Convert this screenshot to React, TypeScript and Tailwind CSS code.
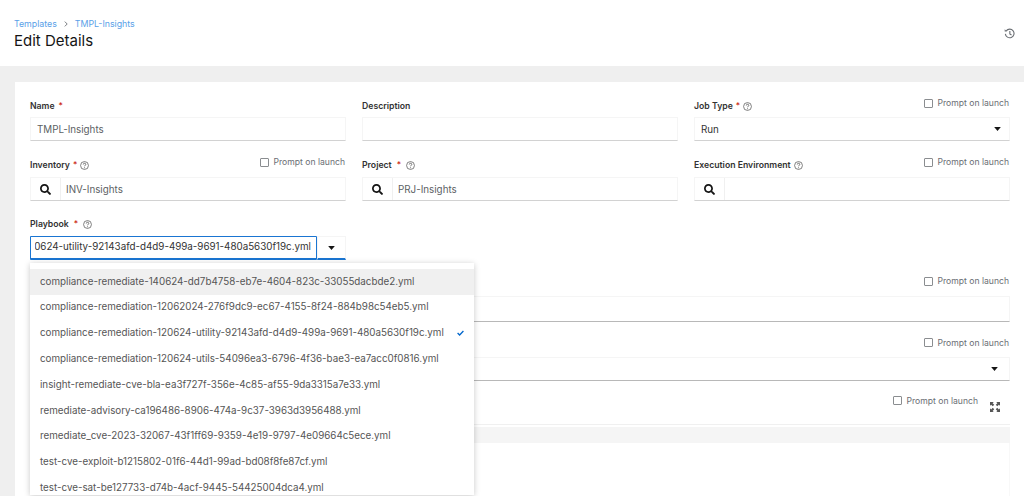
import React from "react";

const Help = () => (
  <svg viewBox="0 0 16 16" className="w-[9px] h-[9px] shrink-0 text-[#555]" fill="none" stroke="currentColor">
    <circle cx="8" cy="8" r="7" strokeWidth="1.3" />
    <path d="M5.8 6.2C5.8 4.8 6.8 4 8 4s2.3.8 2.3 2c0 1.6-2.2 1.7-2.2 3.4" strokeWidth="1.5" />
    <circle cx="8.1" cy="11.8" r="0.9" fill="currentColor" stroke="none" />
  </svg>
);

const Search = () => (
  <svg viewBox="0 0 512 512" className="w-[11px] h-[11px]" fill="#151515">
    <path d="M505 442.7L405.3 343c-4.5-4.5-10.6-7-17-7H372c27.6-35.3 44-79.7 44-128C416 93.1 322.9 0 208 0S0 93.1 0 208s93.1 208 208 208c48.3 0 92.7-16.4 128-44v16.3c0 6.4 2.5 12.5 7 17l99.7 99.7c9.4 9.4 24.6 9.4 33.9 0l28.3-28.3c9.4-9.4 9.4-24.6.1-34zM208 336c-70.7 0-128-57.2-128-128 0-70.7 57.2-128 128-128 70.7 0 128 57.2 128 128 0 70.7-57.2 128-128 128z" />
  </svg>
);

const Caret = () => (
  <svg viewBox="0 0 10 6" className="w-[7px] h-[4px]" fill="#151515">
    <path d="M0 0h10L5 6z" />
  </svg>
);

const Req = () => <span className="text-[#c9190b] font-normal">*</span>;

const Label = ({ children }: { children: React.ReactNode }) => (
  <span className="flex items-center gap-[3px] text-[8.7px] font-semibold text-[#333] leading-[12px]">{children}</span>
);

const Prompt = () => (
  <span className="flex items-center gap-[5px] text-[8.6px] text-[#6a6e73] leading-[12px]">
    <span className="w-[9px] h-[9px] border border-[#8a8d90] rounded-[1px] bg-white" />
    Prompt on launch
  </span>
);

const Head = ({ children, prompt, up }: { children?: React.ReactNode; prompt?: boolean; up?: boolean }) => (
  <div className="flex justify-between items-start h-[12px] mb-[6px] relative">
    <div className={up ? "mt-[0px]" : "mt-[1px]"}>{children}</div>
    {prompt && <div className={up ? "-mt-[3px] mr-[1px]" : "-mt-[2px] mr-[1px]"}><Prompt /></div>}
  </div>
);

const Input = ({ children, search }: { children?: React.ReactNode; search?: boolean }) => (
  <div className="flex items-center h-[24px] pt-[2px] border border-[#f5f5f5] border-b-[#d2d2d2] border-b-[1.5px] text-[9.8px] text-[#5c5f63] bg-white">
    {search && (
      <span className="w-[30px] -mt-[2px] h-[22px] flex items-center justify-center border-r border-[#f0f0f0] shrink-0"><Search /></span>
    )}
    <span className={search ? "pl-[5px]" : "pl-[6px]"}>{children}</span>
  </div>
);

const items = [
  "compliance-remediate-140624-dd7b4758-eb7e-4604-823c-33055dacbde2.yml",
  "compliance-remediation-12062024-276f9dc9-ec67-4155-8f24-884b98c54eb5.yml",
  "compliance-remediation-120624-utility-92143afd-d4d9-499a-9691-480a5630f19c.yml",
  "compliance-remediation-120624-utils-54096ea3-6796-4f36-bae3-ea7acc0f0816.yml",
  "insight-remediate-cve-bla-ea3f727f-356e-4c85-af55-9da3315a7e33.yml",
  "remediate-advisory-ca196486-8906-474a-9c37-3963d3956488.yml",
  "remediate_cve-2023-32067-43f1ff69-9359-4e19-9797-4e09664c5ece.yml",
  "test-cve-exploit-b1215802-01f6-44d1-99ad-bd08f8fe87cf.yml",
  "test-cve-sat-be127733-d74b-4acf-9445-54425004dca4.yml",
];

export default function App() {
  return (
    <div className="w-[1024px] h-[496px] overflow-hidden bg-[#efefef] font-['Inter','Noto_Sans',sans-serif]">
      <header className="h-[66px] bg-white pl-[14px] pr-[9px] pt-[18px] flex justify-between">
        <div>
          <div className="flex items-center text-[8.8px] leading-[12px] text-[#5a9fe8]">
            <span>Templates</span>
            <svg viewBox="0 0 6 10" className="w-[4px] h-[6px] mx-[7px]" fill="none" stroke="#6a6e73" strokeWidth="1.5"><path d="M1 1l4 4-4 4" /></svg>
            <span>TMPL-Insights</span>
          </div>
          <h1 className="text-[15px] leading-[20px] mt-[1px] text-[#151515]">Edit Details</h1>
        </div>
        <svg viewBox="0 0 16 16" className="w-[11px] h-[11px] mt-[10px]" fill="none" stroke="#6a6e73" strokeWidth="1.6">
          <path d="M3.2 4.2A6.3 6.3 0 1 1 2 8.5" />
          <path d="M1 1.8v3.4h3.4" fill="#6a6e73" stroke="none" />
          <path d="M8.5 4.5V8.5l2.4 1.6" />
        </svg>
      </header>

      <main className="h-[414px] mt-[16px] ml-[15px] bg-white pl-[15px] pr-[14px] pt-[17px] relative overflow-hidden">
        <div className="grid grid-cols-3 gap-x-[16px]">
          <div className="mb-[18px]">
            <Head><Label>Name <span className="ml-[1px]"><Req /></span></Label></Head>
            <Input>TMPL-Insights</Input>
          </div>
          <div className="mb-[18px]">
            <Head><Label>Description</Label></Head>
            <Input />
          </div>
          <div className="mb-[18px]">
            <Head prompt><Label>Job Type <Req /> <Help /></Label></Head>
            <div className="relative">
              <Input><span className="text-[#333]">Run</span></Input>
              <span className="absolute right-[9px] top-[10px] flex"><Caret /></span>
            </div>
          </div>

          <div className="mb-[17px]">
            <Head up prompt><Label>Inventory <Req /> <Help /></Label></Head>
            <Input search>INV-Insights</Input>
          </div>
          <div className="mb-[17px]">
            <Head up><Label>Project <span className="ml-[2px] mr-[2px]"><Req /></span> <Help /></Label></Head>
            <Input search>PRJ-Insights</Input>
          </div>
          <div className="mb-[17px]">
            <Head up prompt><Label>Execution Environment <Help /></Label></Head>
            <Input search />
          </div>

          <div className="col-span-3 relative w-[316px] mb-[17px]">
            <Head up><Label>Playbook <span className="ml-[2px] mr-[2px]"><Req /></span> <Help /></Label></Head>
            <div className="flex h-[24px]">
              <div className="w-[287px] border border-[#1a75d2] border-b-2 rounded-[1px] text-[9.8px] text-[#333] pl-[4px] pr-[5px] flex items-center">
                <div className="w-full flex justify-end overflow-hidden whitespace-nowrap">
                  <span>compliance-remediation-120624-utility-92143afd-d4d9-499a-9691-480a5630f19c.yml</span>
                </div>
              </div>
              <div className="flex-1 flex items-center justify-center border border-[#f5f5f5] border-b-[#1a75d2] border-b-2"><Caret /></div>
            </div>
            <ul className="absolute z-10 left-0 top-[45px] w-[444px] h-[232px] overflow-hidden bg-white shadow-[0_1px_6px_rgba(0,0,0,0.22)] pt-[6px] text-[9.8px] text-[#555]">
              {items.map((t, i) => (
                <li key={t} className={`h-[25.8px] flex items-center justify-between pl-[10px] pr-[10px] whitespace-nowrap ${i === 0 ? "bg-[#f0f0f0]" : ""}`}>
                  <span>{t}</span>
                  {i === 2 && (
                    <svg viewBox="0 0 12 10" className="w-[7px] h-[6px]" fill="none" stroke="#06c" strokeWidth="2.2"><path d="M1 5l3.5 3.5L11 1.5" /></svg>
                  )}
                </li>
              ))}
            </ul>
          </div>

          <div className="col-span-3">
            <div className="flex justify-end h-[19px] items-start"><div className="-mt-[2px] mr-[1px]"><Prompt /></div></div>
            <div className="h-[25.5px] border border-[#f5f5f5] border-b-[#b8b8b8] border-b-[1.5px]" />
          </div>

          <div className="col-span-3">
            <div className="flex justify-end h-[35px] items-start"><div className="mt-[15px] mr-[1px]"><Prompt /></div></div>
            <div className="relative h-[24px] border border-[#f5f5f5] border-b-[#b8b8b8] border-b-[1.5px]">
              <span className="absolute right-[11px] top-[9px] flex"><Caret /></span>
            </div>
          </div>

          <div className="col-span-3">
            <div className="flex justify-end items-start h-[44px] border-b border-[#f0f0f0] relative">
              <div className="mt-[14px] mr-[32px]"><Prompt /></div>
              <svg viewBox="0 0 16 16" className="absolute right-[10px] top-[21px] w-[10px] h-[10px]" fill="#555" stroke="none">
                <path d="M0 0h6L4.2 1.8 6.8 4.4 4.4 6.8 1.8 4.2 0 6zM16 0v6l-1.8-1.8-2.6 2.6-2.4-2.4 2.6-2.6L10 0zM16 16h-6l1.8-1.8-2.6-2.6 2.4-2.4 2.6 2.6L16 10zM0 16v-6l1.8 1.8 2.6-2.6 2.4 2.4-2.6 2.6L6 16z" />
              </svg>
            </div>
            <div className="mt-[2px] h-[16px] bg-[#f5f5f5]" />
            <div className="h-[60px] border-r border-[#f8f8f8]" />
          </div>
        </div>
      </main>
    </div>
  );
}
